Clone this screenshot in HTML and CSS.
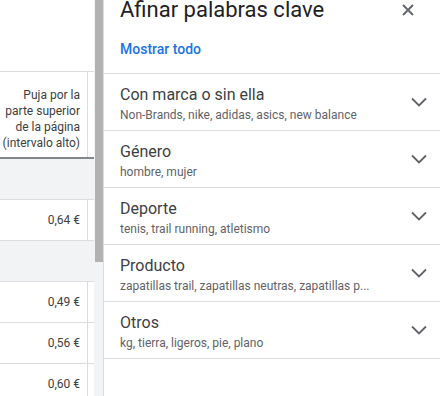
FILE: index.html
```html
<!DOCTYPE html>
<html lang="es">
<head>
    <meta charset="UTF-8">
    <meta name="viewport" content="width=device-width, initial-scale=1.0">
    <title>Afinar palabras clave</title>
    <link rel="stylesheet" href="styles.css">
</head>
<body>
    <div class="page">
        <!-- Table behind the side panel -->
        <div class="table-area">
            <div class="table-top"></div>
            <div class="table-row header-row">
                <div class="cell">Puja por la parte superior de la página (intervalo alto)</div>
                <div class="cell-next"></div>
            </div>
            <div class="table-row group-row"></div>
            <div class="table-row">
                <div class="cell">0,64 €</div>
                <div class="cell-next"></div>
            </div>
            <div class="table-row group-row"></div>
            <div class="table-row">
                <div class="cell">0,49 €</div>
                <div class="cell-next"></div>
            </div>
            <div class="table-row">
                <div class="cell">0,56 €</div>
                <div class="cell-next"></div>
            </div>
            <div class="table-row">
                <div class="cell">0,60 €</div>
                <div class="cell-next"></div>
            </div>
        </div>

        <div class="scrollbar">
            <div class="scroll-thumb"></div>
        </div>

        <!-- Refine keywords panel -->
        <div class="panel">
            <div class="panel-header">
                <h1>Afinar palabras clave</h1>
                <button class="close-btn" aria-label="Cerrar">
                    <svg width="12" height="12" viewBox="0 0 12 12">
                        <path d="M1 1L11 11M11 1L1 11" stroke="#5f6368" stroke-width="1.8" fill="none"/>
                    </svg>
                </button>
            </div>
            <a class="show-all" href="#">Mostrar todo</a>

            <div class="refine-list">
                <div class="refine-item">
                    <div class="refine-text">
                        <div class="refine-title">Con marca o sin ella</div>
                        <div class="refine-sub">Non-Brands, nike, adidas, asics, new balance</div>
                    </div>
                    <svg class="chevron" width="16" height="10" viewBox="0 0 16 10">
                        <path d="M1 1.5L8 8.5L15 1.5" stroke="#5f6368" stroke-width="1.8" fill="none"/>
                    </svg>
                </div>
                <div class="refine-item">
                    <div class="refine-text">
                        <div class="refine-title">Género</div>
                        <div class="refine-sub">hombre, mujer</div>
                    </div>
                    <svg class="chevron" width="16" height="10" viewBox="0 0 16 10">
                        <path d="M1 1.5L8 8.5L15 1.5" stroke="#5f6368" stroke-width="1.8" fill="none"/>
                    </svg>
                </div>
                <div class="refine-item">
                    <div class="refine-text">
                        <div class="refine-title">Deporte</div>
                        <div class="refine-sub">tenis, trail running, atletismo</div>
                    </div>
                    <svg class="chevron" width="16" height="10" viewBox="0 0 16 10">
                        <path d="M1 1.5L8 8.5L15 1.5" stroke="#5f6368" stroke-width="1.8" fill="none"/>
                    </svg>
                </div>
                <div class="refine-item">
                    <div class="refine-text">
                        <div class="refine-title">Producto</div>
                        <div class="refine-sub">zapatillas trail, zapatillas neutras, zapatillas p...</div>
                    </div>
                    <svg class="chevron" width="16" height="10" viewBox="0 0 16 10">
                        <path d="M1 1.5L8 8.5L15 1.5" stroke="#5f6368" stroke-width="1.8" fill="none"/>
                    </svg>
                </div>
                <div class="refine-item">
                    <div class="refine-text">
                        <div class="refine-title">Otros</div>
                        <div class="refine-sub">kg, tierra, ligeros, pie, plano</div>
                    </div>
                    <svg class="chevron" width="16" height="10" viewBox="0 0 16 10">
                        <path d="M1 1.5L8 8.5L15 1.5" stroke="#5f6368" stroke-width="1.8" fill="none"/>
                    </svg>
                </div>
            </div>
        </div>
    </div>
</body>
</html>
```

FILE: styles.css
```css
body {
    margin: 0;
    font-family: Roboto, "Liberation Sans", Arial, sans-serif;
    background-color: #fff;
    color: #3c4043;
}

.page {
    display: flex;
    width: 440px;
    height: 396px;
    overflow: hidden;
}

/* Left table */
.table-area {
    width: 94px;
    flex-shrink: 0;
}

.table-top {
    height: 71px;
    border-bottom: 1px solid #dadce0;
}

.table-row {
    display: flex;
    height: 40px;
    border-bottom: 1px solid #dadce0;
}

.cell {
    width: 80px;
    padding-right: 7px;
    border-right: 1px solid #dadce0;
    display: flex;
    align-items: center;
    justify-content: flex-end;
    text-align: right;
    font-size: 12px;
    line-height: 16px;
}

.cell-next {
    flex: 1;
}

.header-row {
    height: 85px;
    border-bottom: 2px solid #80868b;
}

.header-row .cell {
    align-items: flex-end;
    padding-bottom: 6px;
}

.group-row {
    background-color: #f1f3f4;
}

/* Scrollbar between table and panel */
.scrollbar {
    width: 9px;
    flex-shrink: 0;
    background-color: #f1f3f4;
}

.scroll-thumb {
    height: 262px;
    margin-left: 1px;
    background-color: #b2b2b2;
}

/* Side panel */
.panel {
    flex: 1;
    border-left: 1px solid #dadce0;
}

.panel-header {
    display: flex;
    justify-content: space-between;
    align-items: center;
    padding: 0 26px 0 16px;
    margin-top: -4px;
}

.panel-header h1 {
    margin: 0;
    font-size: 22px;
    line-height: 28px;
    font-weight: 400;
    color: #202124;
}

.close-btn {
    border: none;
    background: none;
    padding: 0;
    width: 12px;
    height: 12px;
    display: flex;
    cursor: pointer;
}

.show-all {
    display: block;
    padding: 17px 16px 0;
    height: 32px;
    font-size: 14px;
    line-height: 16px;
    font-weight: 500;
    color: #1a73e8;
    text-decoration: none;
    border-bottom: 1px solid #dadce0;
}

.refine-item {
    display: flex;
    align-items: center;
    justify-content: space-between;
    height: 56px;
    padding: 0 13px 0 16px;
    border-bottom: 1px solid #dadce0;
}

.refine-text {
    padding-top: 2px;
}

.refine-title {
    font-size: 16px;
    line-height: 22px;
    color: #3c4043;
}

.refine-sub {
    font-size: 12px;
    line-height: 16px;
    color: #5f6368;
    margin-top: 1px;
}

.chevron {
    flex-shrink: 0;
}
```
